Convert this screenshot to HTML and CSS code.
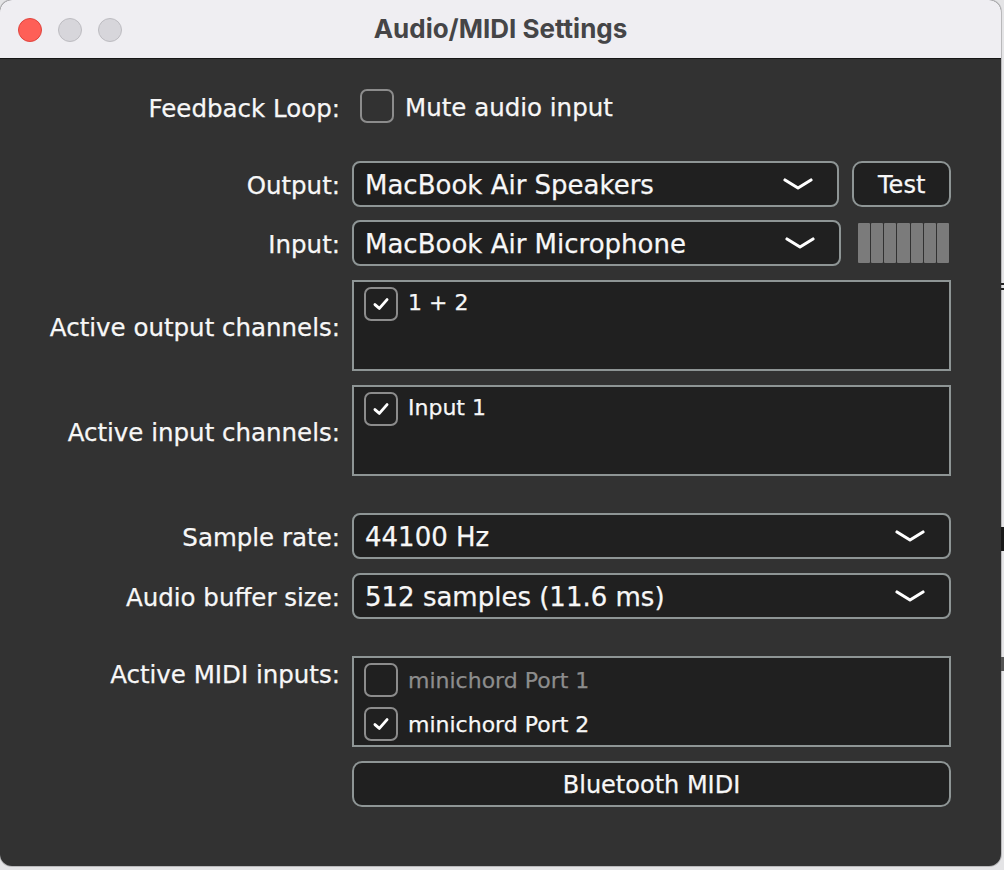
FILE: index.html
```html
<!DOCTYPE html>
<html>
<head>
<meta charset="utf-8">
<link rel="stylesheet" href="styles.css">
</head>
<body>
<div class="window">
  <div class="titlebar">
    <div class="lights">
      <span class="light red"></span>
      <span class="light gray"></span>
      <span class="light gray"></span>
    </div>
    <div class="title">Audio/MIDI Settings</div>
  </div>
  <div class="content">
    <div class="row r-feedback">
      <div class="label">Feedback Loop:</div>
      <div class="ctrl check-row">
        <span class="cb"></span>
        <span class="cb-text">Mute audio input</span>
      </div>
    </div>

    <div class="row r-output">
      <div class="label">Output:</div>
      <div class="ctrl split">
        <div class="dropdown short">
          <span>MacBook Air Speakers</span>
          <svg class="chev" viewBox="0 0 30 14"><path d="M2 3 L15 11 L28 3"/></svg>
        </div>
        <div class="button test">Test</div>
      </div>
    </div>

    <div class="row r-input">
      <div class="label">Input:</div>
      <div class="ctrl split">
        <div class="dropdown short">
          <span>MacBook Air Microphone</span>
          <svg class="chev" viewBox="0 0 30 14"><path d="M2 3 L15 11 L28 3"/></svg>
        </div>
        <div class="meter">
          <span></span><span></span><span></span><span></span><span></span><span></span><span></span>
        </div>
      </div>
    </div>

    <div class="row r-list">
      <div class="label center">Active output channels:</div>
      <div class="ctrl list">
        <div class="item"><span class="cb checked"><svg viewBox="0 0 20 20"><path d="M4.5 10.5 L8.5 14 L15.5 6"/></svg></span><span class="it">1 + 2</span></div>
      </div>
    </div>

    <div class="row r-list">
      <div class="label center">Active input channels:</div>
      <div class="ctrl list">
        <div class="item"><span class="cb checked"><svg viewBox="0 0 20 20"><path d="M4.5 10.5 L8.5 14 L15.5 6"/></svg></span><span class="it">Input 1</span></div>
      </div>
    </div>

    <div class="row r-rate">
      <div class="label">Sample rate:</div>
      <div class="ctrl">
        <div class="dropdown">
          <span>44100 Hz</span>
          <svg class="chev" viewBox="0 0 30 14"><path d="M2 3 L15 11 L28 3"/></svg>
        </div>
      </div>
    </div>

    <div class="row r-buffer">
      <div class="label">Audio buffer size:</div>
      <div class="ctrl">
        <div class="dropdown">
          <span>512 samples (11.6 ms)</span>
          <svg class="chev" viewBox="0 0 30 14"><path d="M2 3 L15 11 L28 3"/></svg>
        </div>
      </div>
    </div>

    <div class="row r-midi">
      <div class="label top">Active MIDI inputs:</div>
      <div class="ctrl list midi">
        <div class="item dim"><span class="cb"></span><span>minichord Port 1</span></div>
        <div class="item"><span class="cb checked"><svg viewBox="0 0 20 20"><path d="M4.5 10.5 L8.5 14 L15.5 6"/></svg></span><span>minichord Port 2</span></div>
      </div>
    </div>

    <div class="row r-bt">
      <div class="label"></div>
      <div class="ctrl">
        <div class="button wide">Bluetooth MIDI</div>
      </div>
    </div>
  </div>
</div>
<span class="bg-mark m1"></span>
<span class="bg-mark m2"></span>
<span class="bg-mark m3"></span>
</body>
</html>
```
FILE: styles.css
```css
html, body {
  margin: 0;
  padding: 0;
}
body {
  width: 1004px;
  height: 870px;
  background: #e4e4e6;
  position: relative;
  overflow: hidden;
  font-family: "DejaVu Sans", Verdana, sans-serif;
}
.window {
  width: 1001px;
  height: 866px;
  border-radius: 12px;
  overflow: hidden;
  background: #323232;
  box-shadow: 0 0 0 1px #b9b9bb;
  display: flex;
  flex-direction: column;
}
.titlebar {
  height: 58px;
  flex: none;
  background: #efeef2;
  border-bottom: 1px solid #161616;
  position: relative;
  display: flex;
  align-items: center;
  justify-content: center;
}
.lights {
  position: absolute;
  left: 18px;
  top: 18px;
  display: flex;
  gap: 16px;
}
.light {
  width: 22px;
  height: 22px;
  border-radius: 50%;
  border: 1px solid #bdbcc1;
  background: #d7d6db;
}
.light.red {
  background: #fe5f57;
  border-color: #e0443e;
}
.title {
  font-family: Inter, "Liberation Sans", sans-serif;
  font-weight: 700;
  font-size: 26px;
  color: #454547;
  margin-top: -1px;
}
.content {
  flex: 1;
  padding-top: 30px;
  color: #f7f7f7;
  -webkit-text-stroke: 0.25px #f7f7f7;
}
.row {
  display: grid;
  grid-template-columns: 340px 599px;
  column-gap: 12px;
  align-items: center;
  font-size: 24.5px;
}
.label {
  text-align: right;
  white-space: nowrap;
  padding-top: 3px;
}
.label.top {
  align-self: start;
  padding-top: 4px;
}
.r-output { margin-top: 38px; }
.r-input { margin-top: 13px; }
.r-list { margin-top: 14px; }
.r-rate { margin-top: 37px; }
.r-buffer { margin-top: 14px; }
.r-midi { margin-top: 37px; }
.r-bt { margin-top: 14px; }

.check-row {
  display: flex;
  align-items: center;
  gap: 11px;
  padding-left: 8px;
}
.cb {
  width: 30px;
  height: 30px;
  border: 2px solid #8c8c8c;
  border-radius: 7px;
  flex: none;
  display: flex;
  align-items: center;
  justify-content: center;
  -webkit-text-stroke: 0;
}
.cb svg {
  width: 22px;
  height: 22px;
  fill: none;
  stroke: #ffffff;
  stroke-width: 2.6;
  stroke-linecap: round;
  stroke-linejoin: round;
}
.r-feedback .label { padding-top: 4px; }
.cb-text { padding-top: 2px; }

.split {
  display: flex;
  align-items: center;
  gap: 13px;
}
.dropdown {
  height: 42px;
  box-sizing: content-box;
  border: 2px solid #8e9595;
  border-radius: 8px;
  background: #202020;
  display: flex;
  align-items: center;
  justify-content: space-between;
  padding: 0 24px 0 11px;
  font-size: 26px;
}
.dropdown span {
  padding-top: 2px;
}
.dropdown.short {
  width: 450px;
}
.chev {
  width: 30px;
  height: 14px;
  fill: none;
  stroke: #ffffff;
  stroke-width: 3.2;
  stroke-linecap: round;
  stroke-linejoin: round;
}
.button {
  border: 2px solid #8e9595;
  border-radius: 10px;
  background: #202020;
  display: flex;
  align-items: center;
  justify-content: center;
  font-size: 24px;
  padding-top: 2px;
  box-sizing: border-box;
}
.test {
  width: 99px;
  height: 46px;
}
.wide {
  height: 46px;
}
.meter {
  margin-left: 4px;
  width: 91px;
  height: 40px;
  display: flex;
  gap: 1px;
}
.meter span {
  flex: 1;
  background: #7b7b7b;
  border-radius: 1px;
}
.list {
  border: 2px solid #8e9595;
  background: #202020;
  padding: 5px 10px;
  box-sizing: border-box;
  height: 91px;
}
.item {
  display: flex;
  align-items: center;
  gap: 10px;
  font-size: 22px;
  height: 34px;
}
.item .it {
  margin-top: -3px;
}
.midi {
  padding-top: 5px;
}
.midi .item + .item {
  margin-top: 10px;
}
.item.dim {
  color: #8d8d8d;
  -webkit-text-stroke: 0.25px #8d8d8d;
}
.bg-mark {
  position: absolute;
  background: #222;
}
.m1 { left: 1001px; top: 283px; width: 3px; height: 2px; box-shadow: 0 5px 0 #222; }
.m2 { left: 1001px; top: 527px; width: 3px; height: 24px; background: #1a1a1a; }
.m3 { left: 1001px; top: 657px; width: 3px; height: 14px; background: #555; }
```
